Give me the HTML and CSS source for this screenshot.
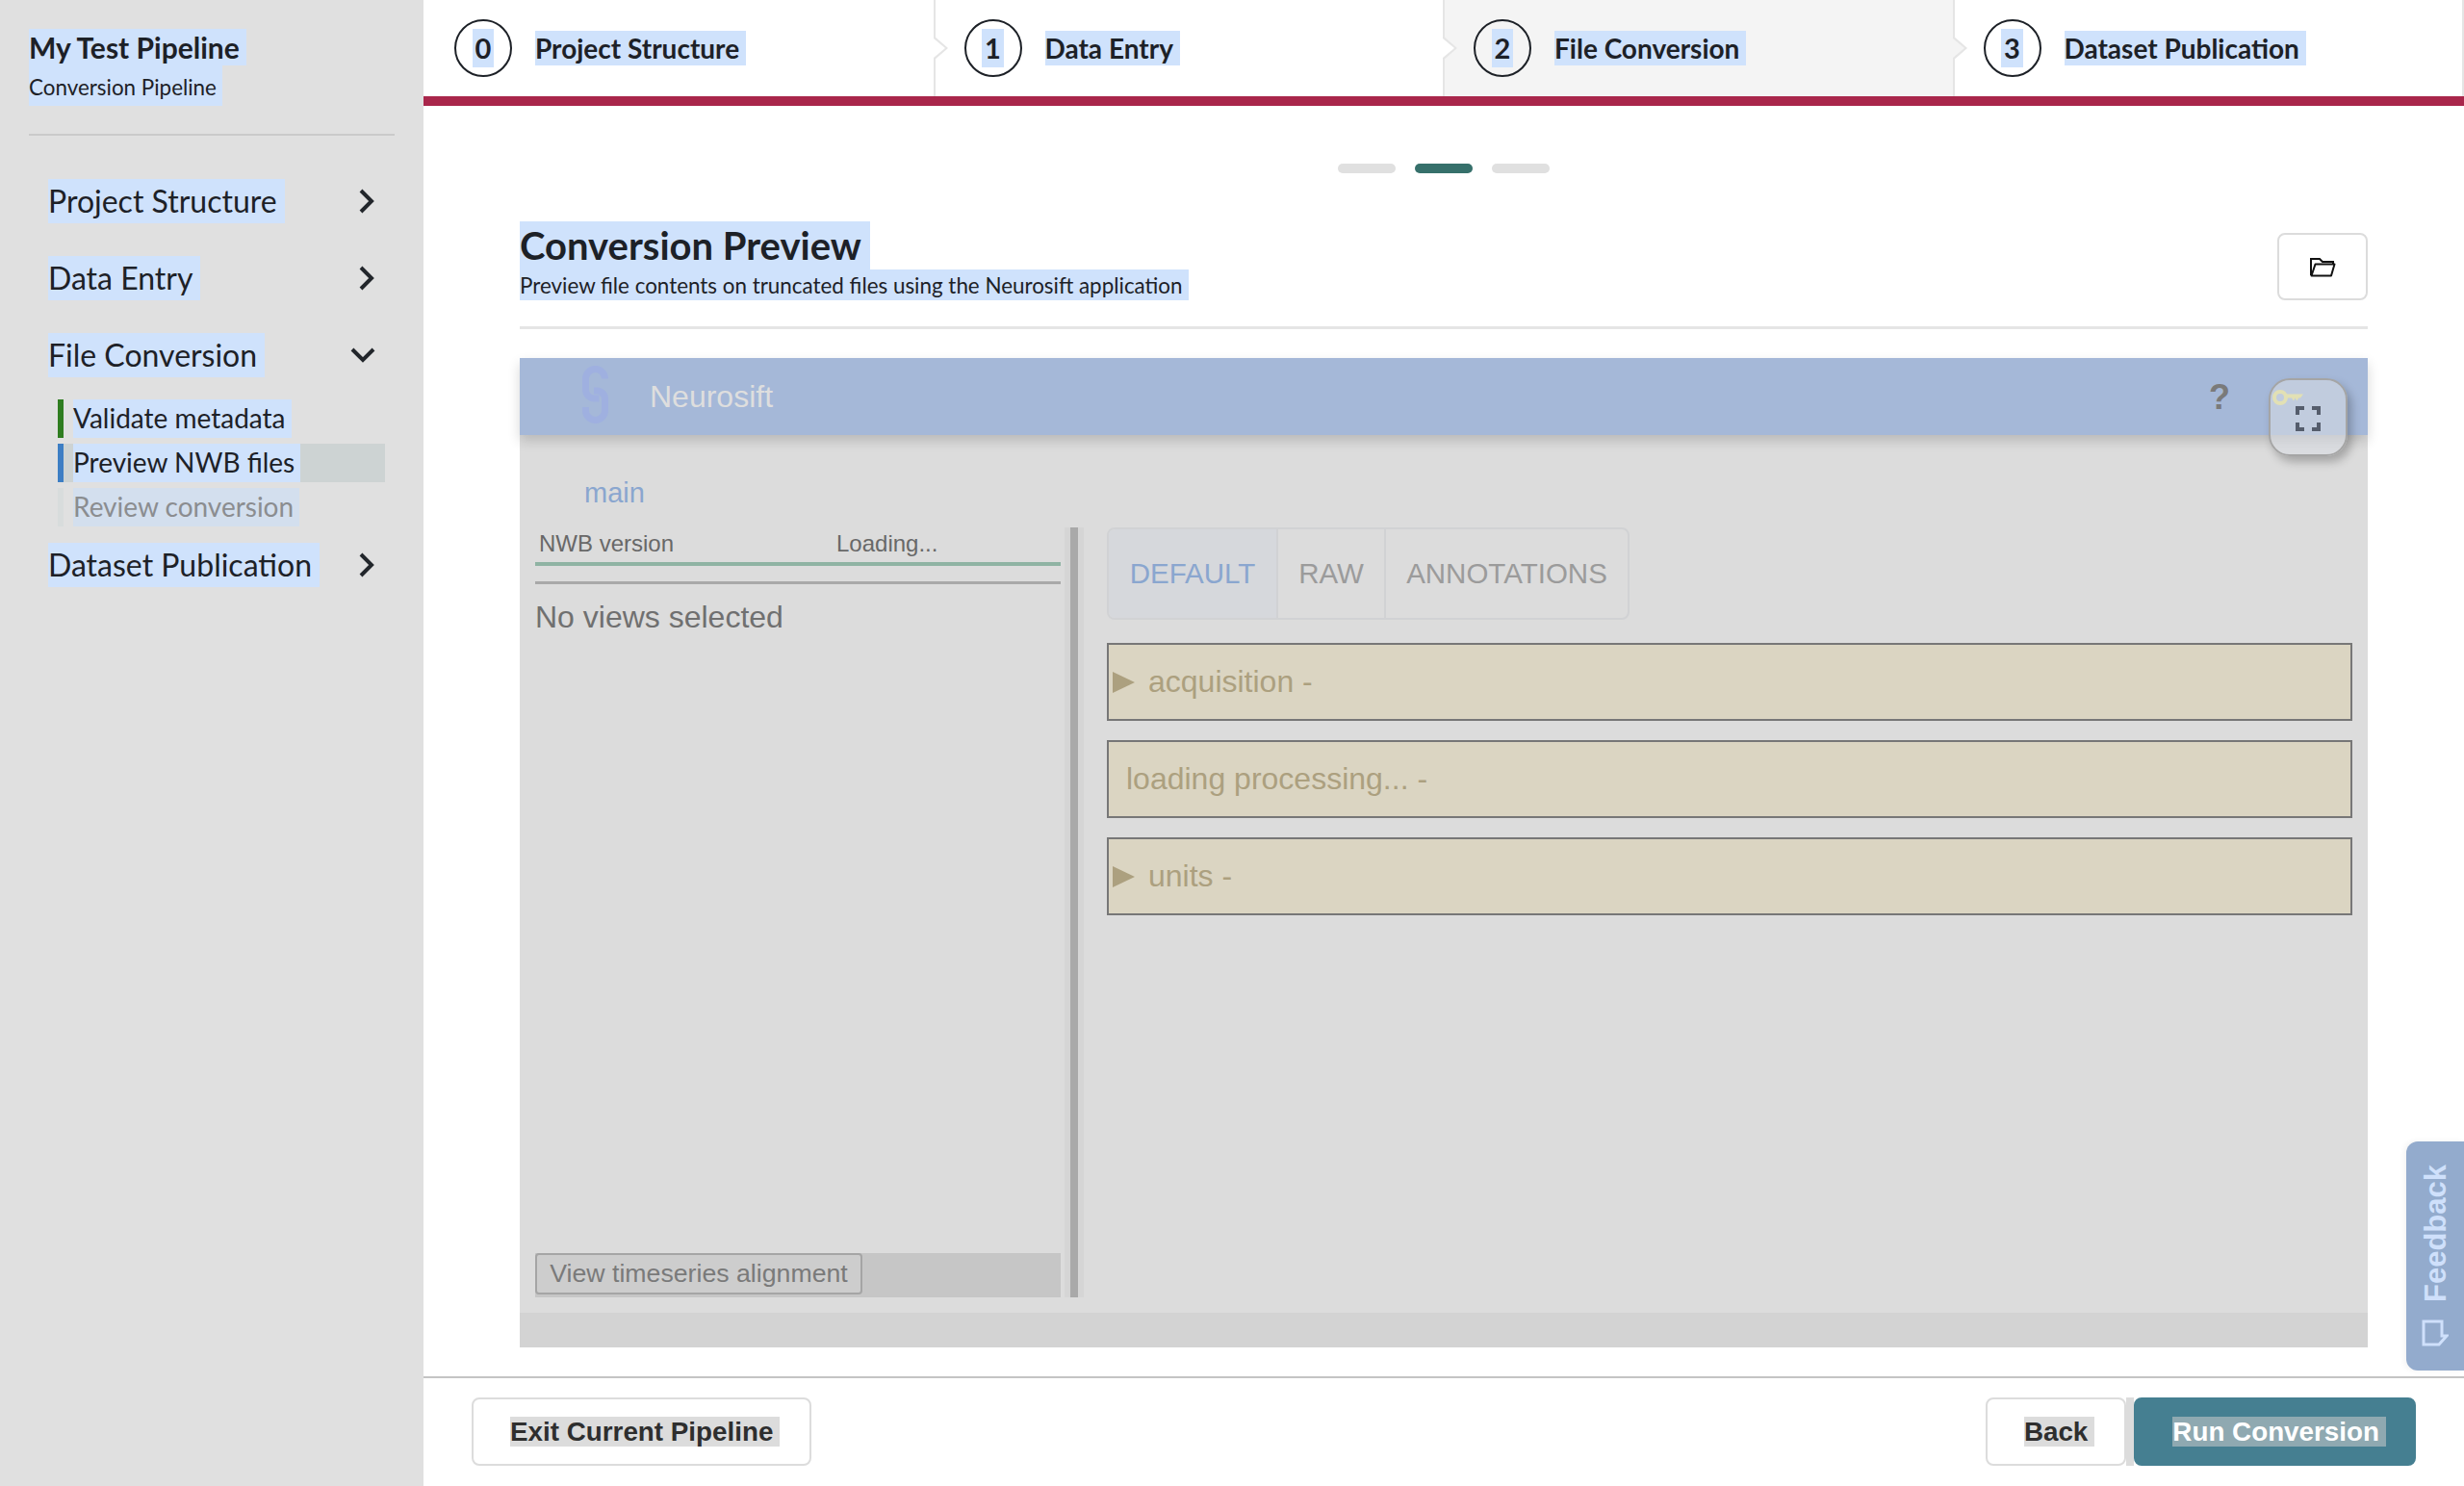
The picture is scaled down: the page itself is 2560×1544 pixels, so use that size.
FILE: index.html
```html
<!DOCTYPE html>
<html lang="en">
<head>
<meta charset="utf-8">
<title>Conversion Preview</title>
<link rel="stylesheet" href="styles.css">
</head>
<body>
<div class="app">
  <aside class="sidebar">
    <div class="brand">
      <div class="brand-title"><span class="hl">My Test Pipeline</span></div>
      <div class="brand-sub"><span class="hl">Conversion Pipeline</span></div>
    </div>
    <nav class="nav">
      <div class="nav-row"><span class="hl">Project Structure</span>
        <svg class="chev" width="16" height="26" viewBox="0 0 16 26"><path d="M2 2l11 11L2 24"/></svg></div>
      <div class="nav-row"><span class="hl">Data Entry</span>
        <svg class="chev" width="16" height="26" viewBox="0 0 16 26"><path d="M2 2l11 11L2 24"/></svg></div>
      <div class="nav-row"><span class="hl">File Conversion</span>
        <svg class="chev chev-down" width="26" height="16" viewBox="0 0 26 16"><path d="M2 2l11 11L24 2"/></svg></div>
      <ul class="subnav">
        <li class="sub sub-done"><span class="sub-text">Validate metadata</span></li>
        <li class="sub sub-active"><span class="sub-text">Preview NWB files</span></li>
        <li class="sub sub-todo"><span class="sub-text">Review conversion</span></li>
      </ul>
      <div class="nav-row"><span class="hl">Dataset Publication</span>
        <svg class="chev" width="16" height="26" viewBox="0 0 16 26"><path d="M2 2l11 11L2 24"/></svg></div>
    </nav>
  </aside>

  <div class="content">
    <header class="stepper">
      <div class="step"><span class="step-num"><span class="num-hl">0</span></span><span class="step-label">Project Structure</span></div>
      <div class="step step-notch"><span class="step-num"><span class="num-hl">1</span></span><span class="step-label">Data Entry</span></div>
      <div class="step step-notch step-current"><span class="step-num"><span class="num-hl">2</span></span><span class="step-label">File Conversion</span></div>
      <div class="step step-notch"><span class="step-num"><span class="num-hl">3</span></span><span class="step-label">Dataset Publication</span></div>
    </header>

    <main class="page">
      <div class="dots"><span class="dot"></span><span class="dot dot-on"></span><span class="dot"></span></div>
      <div class="page-head">
        <div class="page-titles">
          <h1 class="page-title"><span class="hl">Conversion Preview</span></h1>
          <p class="page-sub"><span class="hl">Preview file contents on truncated files using the Neurosift application</span></p>
        </div>
        <button class="folder-btn" aria-label="Open folder">
          <svg width="28" height="22" viewBox="0 0 28 22" fill="none" stroke="#111" stroke-width="2"><path d="M2 20V3h9l3 3h11v2"/><path d="M6.500 8.500H26.500L23 20.500H2.500z" stroke-linejoin="round"/></svg>
        </button>
      </div>

      <section class="viewer">
        <div class="nf-bar">
          <svg class="nf-logo" width="27" height="60" viewBox="0 0 27 60" fill="none" stroke="#9fb0e0" stroke-width="7"><path d="M23.500 13.500a10 10 0 0 0-20 0V25a9 9 0 0 0 9 9h5"/><path d="M12 26h3a8.500 8.500 0 0 1 8.500 8.500V46.500a10 10 0 0 1-20 0V43"/></svg>
          <span class="nf-name">Neurosift</span>
          <span class="nf-help">?</span>
        </div>
        <div class="nf-main">main</div>
        <div class="nf-body">
          <div class="nf-left">
            <div class="nf-meta"><span class="nf-meta-key">NWB version</span><span>Loading...</span></div>
            <div class="nf-rule"></div>
            <div class="nf-empty">No views selected</div>
            <div class="nf-toolbar"><button class="nf-tool">View timeseries alignment</button></div>
          </div>
          <div class="nf-split"><span class="nf-split-bar"></span></div>
          <div class="nf-right">
            <div class="nf-tabs">
              <span class="nf-tab nf-tab-on">DEFAULT</span>
              <span class="nf-tab nf-tab-raw">RAW</span>
              <span class="nf-tab nf-tab-ann">ANNOTATIONS</span>
            </div>
            <div class="nf-acc"><span class="nf-tri"></span>acquisition -</div>
            <div class="nf-acc nf-acc-plain">loading processing... -</div>
            <div class="nf-acc"><span class="nf-tri"></span>units -</div>
          </div>
        </div>
        <div class="nf-strip"></div>
        <div class="nf-float">
          <svg class="nf-key" width="32" height="20" viewBox="0 0 32 20" fill="none"><circle cx="8" cy="10" r="6" stroke="#e2e0b4" stroke-width="4"/><path d="M13 6.500H32l-3 4h-2l-1.500 3-2-3-1.500 3-2-3h-7z" fill="#e2e0b4"/></svg>
          <svg class="nf-full" width="26" height="26" viewBox="0 0 26 26" fill="none" stroke="#555d6c" stroke-width="4"><path d="M2 9V2h7M17 2h7v7M24 17v7h-7M9 24H2v-7"/></svg>
        </div>
      </section>
    </main>

    <footer class="foot">
      <button class="btn"><span class="btn-text">Exit Current Pipeline</span></button>
      <div class="foot-right">
        <button class="btn"><span class="btn-text">Back</span></button><span class="btn-gap"></span><button class="btn btn-primary"><span class="btn-text">Run Conversion</span></button>
      </div>
    </footer>
  </div>

  <div class="feedback">
    <span class="feedback-text">Feedback</span>
    <svg width="28" height="30" viewBox="0 0 28 30" fill="none" stroke="#cfe0fb" stroke-width="3"><path d="M2 26V2h19v15l5 0-8 9z"/></svg>
  </div>
</div>
</body>
</html>
```

FILE: styles.css
```css
* { box-sizing: border-box; }
html, body { margin: 0; height: 100%; }
body { font-family: "Lato", "Liberation Sans", sans-serif; color: #1d2127; overflow: hidden; background: #fff; }
button { font: inherit; }

.app { display: flex; width: 2560px; height: 1544px; position: relative; }
.hl { background: #cfe2fc; }

/* sidebar */
.sidebar { width: 440px; flex: none; background: #e0e0e0; padding: 30px 30px 0; }
.brand { border-bottom: 2px solid #cacaca; height: 111px; }
.brand-title { font-size: 30px; font-weight: 700; height: 38px; line-height: 38px; }
.brand-title .hl { display: inline-block; padding-right: 7px; }
.brand-sub { font-size: 22.400px; height: 42px; line-height: 42px; }
.brand-sub .hl { display: inline-block; padding-right: 6px; padding-top: 2px; height: 42px; line-height: 42px; }

.nav { padding: 45px 0 0 20px; width: 380px; }
.nav-row { display: flex; justify-content: space-between; align-items: center; height: 46px; font-size: 32px; line-height: 46px; margin-bottom: 34px; }
.nav-row .hl { display: inline-block; padding-right: 8px; }
.chev { flex: none; fill: none; stroke: #22262b; stroke-width: 4; margin-right: 21px; }
.chev-down { margin-right: 20px; }
.subnav { list-style: none; margin: -11px 0 17px 10px; padding: 0; width: 340px; display: flex; flex-direction: column; gap: 6px; }
.sub { height: 40px; line-height: 38px; font-size: 28px; padding-left: 10px; border-left: 6px solid; }
.sub-text { display: inline-block; height: 40px; background: #cfe2fc; padding-right: 6px; }
.sub-done { border-color: #2f7d20; }
.sub-active { border-color: #3d7ec4; background: #cdd3d3; }
.sub-todo { border-color: #d8dcdc; color: #8b8d90; }
.sub-todo .sub-text { background: #d3dfee; }

/* stepper */
.content { flex: 1; display: flex; flex-direction: column; min-width: 0; }
.stepper { display: flex; height: 110px; border-bottom: 10px solid #a9264b; flex: none; }
.step { width: 529.500px; height: 100px; flex: none; display: flex; align-items: center; gap: 24px; padding-left: 32px; position: relative; }
.step:last-child { width: 531.500px; border-right: 2px solid #e5e5e5; }
.step-notch { border-left: 2px solid #e5e5e5; padding-left: 30px; }
.step-notch::before { content: ""; position: absolute; left: -2px; top: 37px; width: 0; height: 0; border-top: 13px solid transparent; border-bottom: 13px solid transparent; border-left: 15px solid #e5e5e5; }
.step-notch::after { content: ""; position: absolute; left: -2px; top: 40px; width: 0; height: 0; border-top: 10px solid transparent; border-bottom: 10px solid transparent; border-left: 12px solid #fff; }
.step-current { background: #f4f4f4; }
.step:nth-child(4)::after { border-left-color: #f4f4f4; }
.step-num { width: 60px; height: 60px; flex: none; border: 2px solid #1d2127; border-radius: 50%; display: flex; align-items: center; justify-content: center; font-size: 29px; font-weight: 700; }
.num-hl { background: #cfe2fc; height: 40px; line-height: 40px; padding: 0 3px; }
.step-label { background: #cfe2fc; font-size: 28px; font-weight: 700; height: 36px; line-height: 36px; padding-right: 7px; }

/* page */
.page { flex: 1; padding: 60px 100px 0; display: flex; flex-direction: column; min-height: 0; }
.dots { display: flex; justify-content: center; gap: 20px; height: 10px; flex: none; }
.dot { width: 60px; height: 10px; border-radius: 5px; background: #e0e0e0; }
.dot-on { background: #36706b; }
.page-head { display: flex; justify-content: space-between; align-items: flex-end; margin-top: 50px; height: 112px; flex: none; border-bottom: 3px solid #e5e5e5; padding-bottom: 27px; }
.page-title { margin: 0; font-size: 40px; font-weight: 700; height: 50px; line-height: 50px; }
.page-title .hl { display: inline-block; padding-right: 9px; }
.page-sub { margin: 0; font-size: 22.400px; height: 32px; }
.page-sub .hl { display: inline-block; height: 32px; line-height: 34px; padding-right: 6px; }
.folder-btn { width: 94px; height: 70px; background: #fff; border: 2px solid #dcdcdc; border-radius: 8px; display: flex; align-items: center; justify-content: center; padding: 0; }

/* embedded viewer */
.viewer { position: relative; margin-top: 30px; height: 1028px; flex: none; background: #dcdcdc; display: flex; flex-direction: column; font-family: "Liberation Sans", Arial, sans-serif; color: #707070; }
.nf-bar { height: 80px; flex: none; background: #a5b8d8; box-shadow: 0 6px 12px rgba(0,0,0,.16); display: flex; align-items: center; padding-left: 65px; }
.nf-logo { margin-top: -5px; flex: none; }
.nf-name { margin-left: 43px; font-size: 32px; color: #dedede; }
.nf-help { margin-left: auto; margin-right: 143px; padding-top: 2px; font-size: 36px; font-weight: 700; color: #7a7a7a; }
.nf-main { height: 96px; flex: none; padding: 44px 0 0 67px; font-size: 29px; line-height: 32px; color: #8aa6cf; }
.nf-body { display: flex; height: 800px; flex: none; padding-left: 16px; }
.nf-left { width: 546px; flex: none; display: flex; flex-direction: column; }
.nf-meta { display: flex; height: 40px; border-bottom: 4px solid #8fb3a3; padding-left: 4px; font-size: 24px; line-height: 34px; color: #686868; flex: none; }
.nf-meta-key { width: 309px; }
.nf-rule { height: 3px; background: #a9a9a9; margin-top: 16px; flex: none; }
.nf-empty { font-size: 32px; line-height: 40px; margin-top: 14px; flex: 1; }
.nf-toolbar { height: 46px; background: #c6c6c6; flex: none; }
.nf-tool { width: 340px; height: 43px; padding: 0; background: #cdcdcd; border: 2px solid #a5a5a5; border-radius: 4px; font: 26.700px "Liberation Sans", Arial, sans-serif; color: #7a7a7a; }
.nf-split { width: 20px; margin-left: 4px; flex: none; background: #d5d5d5; display: flex; justify-content: center; }
.nf-split-bar { width: 8px; background: #a9a9a9; }
.nf-right { flex: 1; padding: 0 16px 0 24px; min-width: 0; }
.nf-tabs { display: flex; width: 543px; height: 96px; border: 2px solid #d1d2d4; border-radius: 8px; margin-bottom: 24px; overflow: hidden; }
.nf-tab { display: flex; align-items: center; justify-content: center; font-size: 29.500px; color: #9b9b9b; letter-spacing: 0; border-right: 2px solid #d1d2d4; }
.nf-tab-on { width: 176px; background: #d6d8dc; color: #8aa6cf; }
.nf-tab-raw { width: 112px; }
.nf-tab-ann { flex: 1; border-right: 0; }
.nf-acc { height: 81px; margin-bottom: 20px; background: #dbd5c2; border: 2px solid #777; display: flex; align-items: center; padding-left: 4px; font-size: 32px; color: #aca07f; }
.nf-acc-plain { padding-left: 18px; }
.nf-tri { width: 0; height: 0; border-top: 11px solid transparent; border-bottom: 11px solid transparent; border-left: 23px solid #aca07f; margin-right: 14px; }
.nf-strip { height: 36px; margin-top: 16px; background: #d3d3d3; flex: none; }
.nf-float { position: absolute; left: 1817px; top: 21px; width: 82px; height: 81px; border-radius: 22px; border: 2px solid #a5a5a5; background: rgba(216,220,228,.55); box-shadow: 4px 6px 10px rgba(0,0,0,.25); }
.nf-key { position: absolute; left: 2px; top: 8px; }
.nf-full { position: absolute; left: 26px; top: 27px; }

/* footer */
.foot { height: 114px; flex: none; border-top: 2px solid #c4c4c4; display: flex; justify-content: space-between; padding: 20px 50px 0; }
.foot-right { display: flex; height: 71px; }
.btn { height: 71px; padding: 0 31px 0 38px; background: #fff; border: 2px solid #dcdcdc; border-radius: 8px; font: 700 27.800px "Liberation Sans", Arial, sans-serif; color: #2e2e2e; }
.btn-text { background: #dcdcdc; padding-right: 7px; }
.btn-gap { width: 8px; background: #dcdcdc; }
.btn-primary { background: #457f91; border-color: #457f91; color: #fff; padding-right: 29px; }
.btn-primary .btn-text { background: #8fa9b1; }

/* feedback tab */
.feedback { position: absolute; right: 0; top: 1186px; width: 60px; height: 238px; background: #93abcd; border-radius: 12px 0 0 12px; display: flex; flex-direction: column; align-items: center; padding-top: 24px; gap: 18px; box-shadow: -2px 0 6px rgba(0,0,0,.06); }
.feedback-text { writing-mode: vertical-rl; transform: rotate(180deg); font: 700 31px/1 "Liberation Sans", Arial, sans-serif; color: #cfe0fb; }
```
